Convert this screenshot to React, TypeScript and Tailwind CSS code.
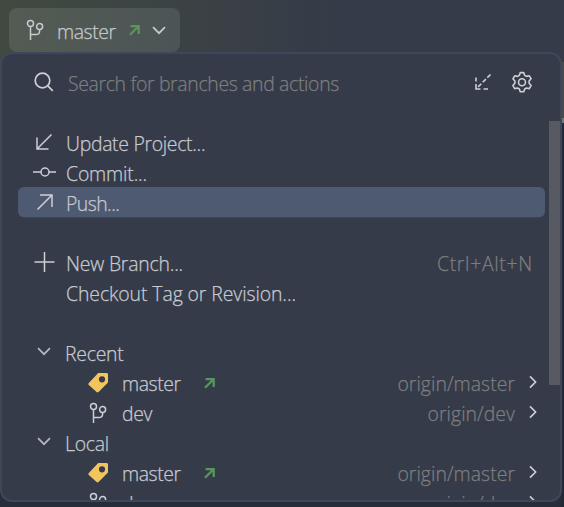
import type { ReactNode } from 'react';

function BranchIcon({ className = '' }: { className?: string }) {
  return (
    <svg className={`h-6 w-6 shrink-0 ${className}`} viewBox="0 0 24 24" fill="none" stroke="currentColor" strokeWidth="1.5">
      <circle cx="7.5" cy="5.6" r="3" />
      <circle cx="16.6" cy="8.6" r="3" />
      <path d="M7.5 8.6V22M7.5 16.5h5.2c2.2 0 3.9-1.2 3.9-3.6v-1.3" />
    </svg>
  );
}

function TagIcon() {
  return (
    <svg className="h-6 w-6 shrink-0" viewBox="0 0 24 24">
      <path
        fill="#f2c55c"
        fillRule="evenodd"
        d="M12.2 2h8.4c.8 0 1.4.6 1.4 1.4v8l-9.4 9.7c-.6.6-1.4.6-2 0L2.8 14c-.6-.6-.6-1.4 0-2zM16 5.2a3.1 3.1 0 1 0 0 6.2 3.1 3.1 0 0 0 0-6.2z"
      />
    </svg>
  );
}

function OutgoingIcon() {
  return (
    <svg className="h-3 w-3 shrink-0" viewBox="0 0 12 12" fill="none" stroke="#57965c" strokeWidth="2.3">
      <path d="M1.6 2.1h8.1V10M9.5 2.3L1 10.8" />
    </svg>
  );
}

function ChevronDown() {
  return (
    <svg className="h-4 w-4 shrink-0" viewBox="0 0 16 16" fill="none" stroke="currentColor" strokeWidth="1.7">
      <path d="M2 5.2l6 6 6-6" />
    </svg>
  );
}

function ChevronRight() {
  return (
    <svg className="h-4 w-4 shrink-0 text-[#ced0d6]" viewBox="0 0 16 16" fill="none" stroke="currentColor" strokeWidth="1.6">
      <path d="M5 2.4l5.6 5.6L5 13.6" />
    </svg>
  );
}

function Stroke({ children, width = 1.5 }: { children: ReactNode; width?: number }) {
  return (
    <svg className="h-6 w-6 shrink-0" viewBox="0 0 24 24" fill="none" stroke="#ced0d6" strokeWidth={width}>
      {children}
    </svg>
  );
}

function ActionRow({ icon, label, tracking, selected = false, shortcut }: {
  icon?: ReactNode;
  label: string;
  tracking: string;
  selected?: boolean;
  shortcut?: string;
}) {
  return (
    <div className={`flex h-[30px] shrink-0 items-center rounded-[6px] pl-[14px] pr-3 ${selected ? 'bg-[#4d5a72] shadow-[0_0.5px_0_0_#465268]' : ''}`}>
      <div className="h-6 w-6 shrink-0">{icon}</div>
      <span className={`mt-1 ml-[10px] ${tracking}`}>{label}</span>
      {shortcut && <span className="mt-1 ml-auto tracking-[0.7px] text-[#7d7e80]">{shortcut}</span>}
    </div>
  );
}

function GroupRow({ label }: { label: string }) {
  return (
    <div className="flex h-[30px] shrink-0 items-center pl-[18px]">
      <div className="-mt-[3px] text-[#b4b8bf]"><ChevronDown /></div>
      <span className="mt-1 ml-[13px] tracking-[-0.25px]">{label}</span>
    </div>
  );
}

function BranchRow({ name, remote, current = false }: { name: string; remote: string; current?: boolean }) {
  return (
    <div className="flex h-[30px] shrink-0 items-center pl-[68px] pr-1">
      <div className="mt-px text-[#ced0d6]">{current ? <TagIcon /> : <BranchIcon />}</div>
      <span className="mt-1 ml-3 tracking-[-0.4px]">{name}</span>
      {current && <div className="mt-px ml-[23px]"><OutgoingIcon /></div>}
      <span className="mt-1 ml-auto tracking-[0.05px] text-[#7d7e80]">{remote}</span>
      <div className="ml-[10px]"><ChevronRight /></div>
    </div>
  );
}

export default function App() {
  return (
    <main className="relative flex h-[507px] w-[564px] flex-col overflow-hidden bg-[#282e39] font-['Open_Sans','Noto_Sans',sans-serif] text-[19.4px] leading-[30px] font-light whitespace-nowrap text-[#c8cad0] [-webkit-text-stroke:0.25px_currentColor]">
      <header className="h-[62px] shrink-0 bg-linear-to-r from-[#414a40] via-[#393f46] via-45% to-[#353b48] to-60% pt-2 pl-[9px]">
        <div className="flex h-[44px] w-[171px] items-start rounded-[8px] bg-linear-to-r from-[#535b53] to-[#4c5556] pl-[14px]">
          <BranchIcon className="mt-[10px]" />
          <span className="mt-[9px] ml-[10px] tracking-[-0.4px]">master</span>
          <div className="mt-[16px] ml-[13px]"><OutgoingIcon /></div>
          <div className="mt-[14px] ml-[10px]"><ChevronDown /></div>
        </div>
      </header>
      <div className="ml-auto flex w-[3px] flex-1 flex-col bg-[#242a35]">
        <div className="h-[56px] bg-[#4a4b4a]" />
        <div className="h-[5px] bg-[#747678]" />
      </div>

      <section className="absolute top-[52px] left-0 flex h-[450px] w-[562px] flex-col overflow-hidden rounded-[12px] border-2 border-[#3f485b] bg-[#353b48]">
        <div className="flex h-[58px] shrink-0 items-center pl-[30px] pr-[26px]">
          <Stroke width={1.7}>
            <circle cx="10.5" cy="9.5" r="7.3" />
            <path d="M15.8 14.8l5 5" />
          </Stroke>
          <span className="mt-0.5 ml-3 tracking-[-0.33px] text-[#7d7e80]">Search for branches and actions</span>
          <div className="ml-auto">
            <Stroke width={1.6}>
              <path d="M19.5 3.5L6 17" strokeDasharray="4.5 2" />
              <path d="M5 6.5v4M5 13v5h4.5M12.5 18H17" />
            </Stroke>
          </div>
          <div className="ml-[15px]">
            <Stroke width={1.6}>
              <circle cx="12" cy="11.2" r="3.5" />
              <path
                strokeLinejoin="round"
                d="M10.3 1.6h3.4l1 2.8 1.7 1 2.9-.6 1.8 3-2 2.3v2.2l2 2.3-1.8 3-2.9-.6-1.7 1-1 2.8h-3.4l-1-2.8-1.7-1-2.9.6-1.8-3 2-2.3v-2.2l-2-2.3 1.8-3 2.9.6 1.7-1z"
              />
            </Stroke>
          </div>
        </div>
        <div className="flex h-[388px] shrink-0 overflow-hidden">
          <div className="flex w-[543px] shrink-0 flex-col pt-[15px] pl-4">
            <ActionRow label="Update Project..." tracking="tracking-[-0.3px]" icon={<Stroke><path d="M19.5 4.5L5 19M5 7.5V19h11.5" /></Stroke>} />
            <ActionRow label="Commit..." tracking="tracking-[-0.15px]" icon={<Stroke><circle cx="13" cy="12" r="4" /><path d="M1 12h8M17 12h8" /></Stroke>} />
            <ActionRow label="Push..." tracking="tracking-[-0.55px]" selected icon={<Stroke><path d="M5.5 19.5L20 5M8 5h12v12" /></Stroke>} />
            <div className="h-[30px] shrink-0" />
            <ActionRow label="New Branch..." tracking="tracking-[-0.2px]" shortcut="Ctrl+Alt+N" icon={<Stroke><path d="M12.5 2v20M2.5 12h20" /></Stroke>} />
            <ActionRow label="Checkout Tag or Revision..." tracking="tracking-[-0.08px]" />
            <div className="h-[30px] shrink-0" />
            <GroupRow label="Recent" />
            <BranchRow name="master" remote="origin/master" current />
            <BranchRow name="dev" remote="origin/dev" />
            <GroupRow label="Local" />
            <BranchRow name="master" remote="origin/master" current />
            <BranchRow name="dev" remote="origin/dev" />
          </div>
          <div className="mt-[9px] ml-1 h-[264px] w-[11px] bg-[#575a62]" />
        </div>
      </section>
    </main>
  );
}
